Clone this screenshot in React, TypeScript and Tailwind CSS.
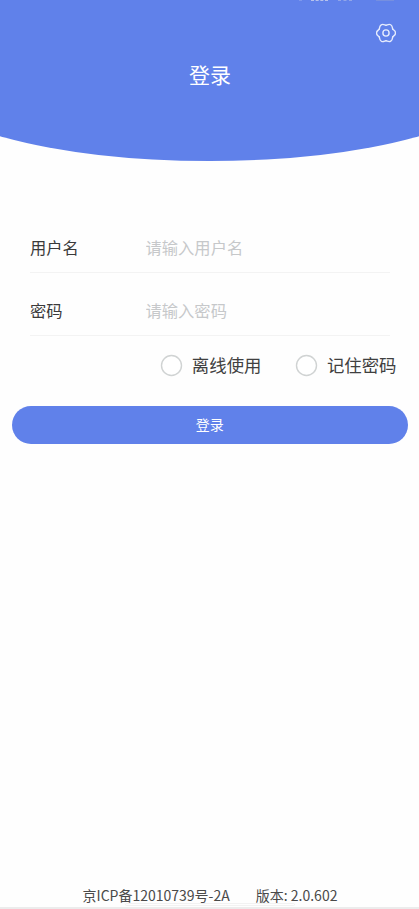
import { useState } from "react";

interface FieldProps {
  label: string;
  placeholder: string;
  type?: string;
  value: string;
  onChange: (value: string) => void;
}

function Field({ label, placeholder, type = "text", value, onChange }: FieldProps) {
  return (
    <label className="flex h-[63px] items-center border-b border-[#f3f3f3] pt-[13px] text-[16.3px] text-[#3a3a3a]">
      <span className="w-[115.5px] shrink-0">{label}</span>
      <input
        type={type}
        className="min-w-0 flex-1 bg-transparent outline-none placeholder:text-[#c6c8ca]"
        placeholder={placeholder}
        value={value}
        onChange={(e) => onChange(e.target.value)}
      />
    </label>
  );
}

interface RadioProps {
  label: string;
  checked: boolean;
  onToggle: () => void;
}

function Radio({ label, checked, onToggle }: RadioProps) {
  return (
    <button className="flex items-center gap-[9px]" onClick={onToggle}>
      <svg className="size-[23px]" viewBox="0 0 23 23">
        <circle
          cx="11.5"
          cy="11.5"
          r="10"
          strokeWidth="1.4"
          className={checked ? "fill-[#6081ea] stroke-[#6081ea]" : "fill-white stroke-[#d0d3d3]"}
        />
      </svg>
      <span className="text-[17.4px] leading-6 text-[#404040]">{label}</span>
    </button>
  );
}

function SettingsIcon() {
  return (
    <svg className="size-5" viewBox="0 0 20 20" fill="none" stroke="#e6ecfd" strokeWidth="1.4" strokeLinecap="round">
      {/* one lobe of the nut, repeated around the centre */}
      {[0, 60, 120, 180, 240, 300].map((angle) => (
        <path
          key={angle}
          d="M10 2.2C11.3 2.2 12.5 .5 14.7 1.75S16.1 4.97 16.75 6.1"
          transform={`rotate(${angle} 10 10)`}
        />
      ))}
      <circle cx="10" cy="10" r="3.1" />
    </svg>
  );
}

export default function App() {
  const [username, setUsername] = useState("");
  const [password, setPassword] = useState("");
  const [offline, setOffline] = useState(false);
  const [remember, setRemember] = useState(false);

  return (
    <main className="relative flex h-[909px] w-full flex-col overflow-hidden bg-[#fefefe] font-['Noto_Sans_CJK_SC',sans-serif]">
      <header className="flex h-[160.5px] shrink-0 justify-center">
        <div className="flex w-[138%] shrink-0 flex-col items-center rounded-b-[50%] bg-[#6081ea]">
          {/* bottom edge of the system status bar */}
          <div className="flex h-[23px] w-[419px] items-start pl-[299px]">
            <span className="h-px w-[3px] bg-[#7d97ec]" />
            <span className="ml-[9px] w-[17px] border-t border-dashed border-[#b6c2ec]" />
            <span className="ml-[10px] w-[14px] border-t border-dashed border-[#91a5e8]" />
            <span className="ml-[24px] h-px w-[18px] bg-[#768fdf]" />
          </div>
          <button className="ml-[353px]" aria-label="设置">
            <SettingsIcon />
          </button>
          <h1 className="mt-4 pl-px text-[21px] leading-[30px] text-white">登录</h1>
        </div>
      </header>

      <section className="mt-[49.5px] ml-[30px] w-[360px]">
        <Field label="用户名" placeholder="请输入用户名" value={username} onChange={setUsername} />
        <Field label="密码" placeholder="请输入密码" type="password" value={password} onChange={setPassword} />
      </section>

      <div className="mt-[17px] flex justify-end gap-[33.5px] pr-[22.5px]">
        <Radio label="离线使用" checked={offline} onToggle={() => setOffline(!offline)} />
        <Radio label="记住密码" checked={remember} onToggle={() => setRemember(!remember)} />
      </div>

      <button className="mt-[29px] mr-[11px] ml-[11.5px] h-[37.5px] shrink-0 rounded-full bg-[#6081ea] pb-0.5 text-sm text-white">
        登录
      </button>

      <footer className="mt-auto">
        <div className="flex justify-center gap-[26px] pl-px text-[14px] leading-5 text-[#4a4a4a]">
          <span>京ICP备12010739号-2A</span>
          <span>版本: 2.0.602</span>
        </div>
        <div className="mt-0.5 h-[2px] bg-[#ececec]" />
      </footer>

      {/* gesture bar */}
      <div className="absolute bottom-[3px] left-[125px] h-[3px] w-[170px] rounded-full border border-[#f2f2f2]" />
    </main>
  );
}
